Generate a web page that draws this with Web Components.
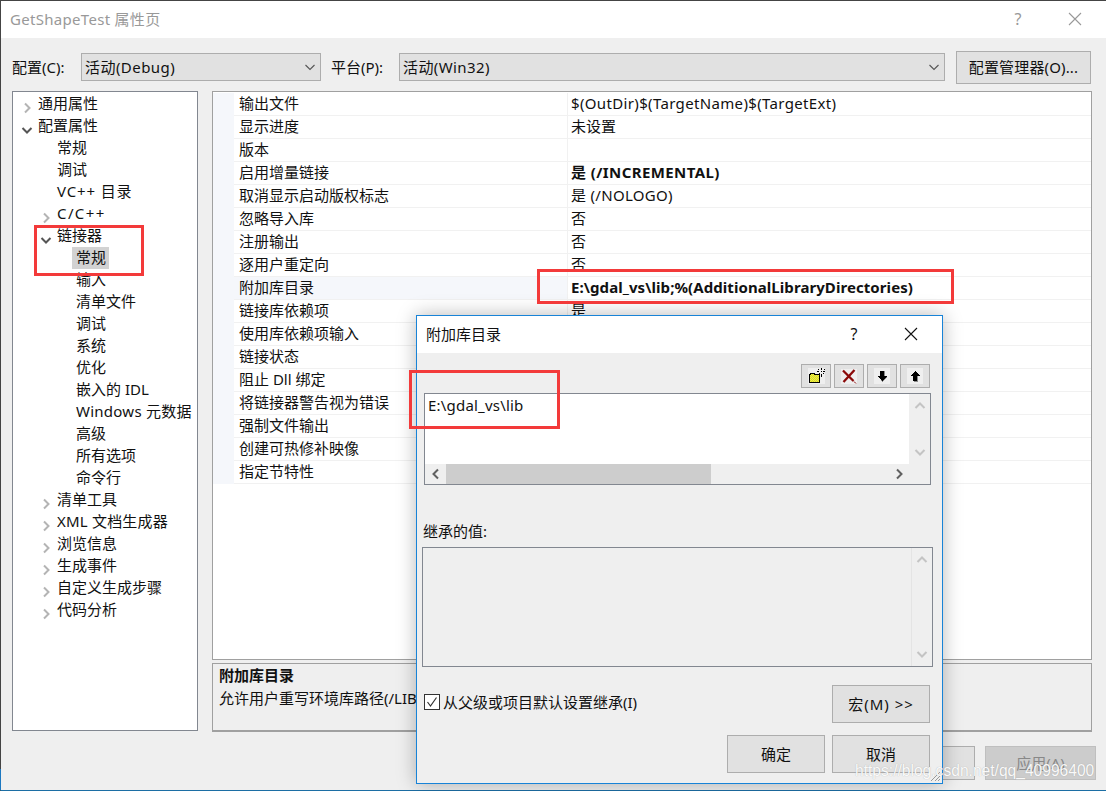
<!DOCTYPE html>
<html>
<head>
<meta charset="utf-8">
<style>
html, body { margin: 0; padding: 0; background: #efefef; }
body { width: 1106px; height: 791px; overflow: hidden; font: 15px "Noto Sans", "Noto Sans CJK SC", sans-serif; color: #111; }
</style>
</head>
<body>
<script>
function define(name, css, html, init) {
    customElements.define(name, class extends HTMLElement {
        constructor() {
            super();
            this.attachShadow({mode: 'open'});
            this.shadowRoot.innerHTML = `<style>${css}</style>${html}`;
        }
        connectedCallback() {
            if (init) init(this, this.shadowRoot);
        }
    });
}

const chevron = (dir, color, size) => {
    const d = {
        down: 'M1.5 4 L6 8.5 L10.5 4',
        up: 'M1.5 8 L6 3.5 L10.5 8',
        left: 'M8 1.5 L3.5 6 L8 10.5',
        right: 'M4 1.5 L8.5 6 L4 10.5'
    }[dir];
    return `<svg width="${size}" height="${size}" viewBox="0 0 12 12"><path d="${d}" fill="none" stroke="${color}" stroke-width="2"/></svg>`;
};

define('title-bar', `
    :host { display: flex; align-items: center; background: #fff; box-sizing: border-box; padding-bottom: 2px; }
    .t { flex: 1; padding-left: 9px; color: var(--title-color, #999); letter-spacing: var(--track, 0); }
    .q { width: 20px; text-align: center; color: var(--ctl-color, #999); font-size: 16px; }
    .x { display: flex; margin: 0 24px 0 40px; }
`, `
    <div class="t"><slot></slot></div>
    <div class="q">?</div>
    <div class="x"><svg width="14" height="14" viewBox="0 0 14 14"><path d="M1 1 L13 13 M13 1 L1 13" stroke="var(--ctl-color, #999)" stroke-width="1.1" fill="none"/></svg></div>
`);

define('combo-box', `
    :host { display: flex; align-items: center; justify-content: space-between; box-sizing: border-box; height: 28px; background: #e1e1e1; border: 1px solid #adadad; padding: 0 4px 0 3px; letter-spacing: var(--track, 0); }
    span { padding-bottom: 2px; }
    svg { display: block; }
`, `<span><slot></slot></span>${chevron('down', '#555', 12).replace('stroke-width="2"', 'stroke-width="1.1"')}`);

define('push-button', `
    :host { display: flex; align-items: center; justify-content: center; box-sizing: border-box; background: #e1e1e1; border: 1px solid #adadad; letter-spacing: var(--track, 0); padding-bottom: 2px; }
    :host([disabled]) { background: #ccc; border-color: #bfbfbf; color: #888; }
`, `<slot></slot>`);

define('tree-view', `
    :host { display: block; box-sizing: border-box; background: #fff; border: 1px solid #828790; padding: 1px 0 0 0; }
`, `<slot></slot>`);

define('tree-item', `
    :host { display: flex; align-items: center; height: 22px; white-space: nowrap; }
    .arrow { width: 12px; height: 12px; margin-right: 2px; flex: none; }
    .label { padding: 0 3px 2px; line-height: 20px; letter-spacing: var(--track, 0); }
    :host([selected]) .label { background: #d2d2d2; padding-left: 4px; margin-left: -1px; }
`, `<span class="arrow"></span><span class="label"><slot></slot></span>`, (el, root) => {
    el.style.paddingLeft = [8, 27, 46][+el.getAttribute('depth')] + 'px';
    const state = el.getAttribute('state');
    const arrow = root.querySelector('.arrow');
    if (state === 'open') arrow.innerHTML = chevron('down', '#555', 12);
    if (state === 'closed') arrow.innerHTML = chevron('right', '#b4b4b4', 12);
});

define('prop-grid', `
    :host { display: block; box-sizing: border-box; background: #fff; border: 1px solid #a0a0a0; padding-top: 1px; }
`, `<slot></slot>`);

define('prop-row', `
    :host { display: grid; grid-template-columns: 21px 334px 1fr; height: 23px; box-sizing: border-box; white-space: nowrap; }
    .gutter { background: #f5f7fb; }
    .n, .v { line-height: 20px; padding-bottom: 2px; border-bottom: 1px solid #f1f1f1; }
    .n { padding-left: 5px; border-right: 1px solid #f1f1f1; }
    .v { padding-left: 3px; letter-spacing: var(--track, 0); }
    :host([strong]) .v { font-weight: 700; }
    :host([active]) .n { background: #f5f7fb; }
`, `<div class="gutter"></div><div class="n"></div><div class="v"></div>`, (el, root) => {
    root.querySelector('.n').textContent = el.getAttribute('name');
    root.querySelector('.v').textContent = el.getAttribute('value') || '';
});

define('desc-panel', `
    :host { display: block; box-sizing: border-box; background: #efefef; border: 1px solid #a0a0a0; border-bottom-width: 2px; padding: 0 6px; white-space: nowrap; overflow: hidden; }
    .h { font-weight: 700; line-height: 23px; }
    .b { line-height: 23px; }
`, `<div class="h"><slot name="title"></slot></div><div class="b"><slot></slot></div>`);

define('tool-button', `
    :host { display: flex; align-items: center; justify-content: center; box-sizing: border-box; width: 30px; height: 24px; background: #e1e1e1; border: 1px solid #adadad; }
    .i { display: flex; background: #efefef; }
    ::slotted(svg) { display: block; }
`, `<div class="i"><slot></slot></div>`);

define('scroll-bar', `
    :host { display: flex; box-sizing: border-box; background: #efefef; flex: none; }
    :host([dir="h"]) { height: 20px; align-items: center; }
    :host([dir="v"]) { width: 21px; flex-direction: column; align-items: center; justify-content: space-between; padding: 6px 0; }
    .b { flex: none; display: flex; align-items: center; justify-content: center; width: 21px; }
    .thumb { height: 100%; background: #cdcdcd; width: 265px; flex: none; }
    .sp { flex: 1; }
`, ``, (el, root) => {
    if (root.querySelector('.b')) return;
    const color = el.getAttribute('arrows') || '#606060';
    const holder = document.createElement('template');
    if (el.getAttribute('dir') === 'h') {
        holder.innerHTML = `<div class="b">${chevron('left', color, 12)}</div><div class="thumb"></div><div class="sp"></div><div class="b">${chevron('right', color, 12)}</div>`;
    } else {
        holder.innerHTML = `<div class="b">${chevron('up', color, 12)}</div><div class="b">${chevron('down', color, 12)}</div>`;
    }
    root.appendChild(holder.content);
});

define('list-box', `
    :host { display: grid; grid-template-columns: 1fr 21px; grid-template-rows: 1fr 20px; box-sizing: border-box; border: 1px solid #828790; background: #efefef; }
    .text { background: #fff; padding: 0 3px; line-height: 23px; letter-spacing: .2px; }
`, `<div class="text"><slot></slot></div><scroll-bar dir="v" arrows="#c4c4c4"></scroll-bar><scroll-bar dir="h"></scroll-bar><div></div>`);

define('check-box', `
    :host { display: flex; align-items: center; gap: 3px; white-space: nowrap; }
    .box { width: 14px; height: 14px; border: 1px solid #333; background: #fff; display: flex; flex: none; }
`, `<div class="box"><svg width="14" height="14" viewBox="0 0 14 14"><path d="M2.5 7 L5.5 11 L11.5 2.5" fill="none" stroke="#333" stroke-width="1.2"/></svg></div><slot></slot>`);

define('red-mark', `
    :host { position: absolute; box-sizing: border-box; border: 3px solid #f33a3a; pointer-events: none; z-index: 5; }
`, ``);

define('sub-dialog', `
    :host { position: absolute; left: 415px; top: 314px; width: 527px; height: 469px; box-sizing: border-box; display: flex; flex-direction: column; background: #efefef; border: 1px solid #1883d7; box-shadow: 0 0 18px rgba(0,0,0,.28); z-index: 3; --title-color: #111; --ctl-color: #111; }
    title-bar { height: 37px; flex: none; }
    .tools { display: flex; justify-content: flex-end; gap: 3px; margin: 11px 12px 5px 0; }
    list-box { margin: 0 11px 0 7px; height: 92px; flex: none; }
    .inh { margin: 36px 0 6px 6px; line-height: 20px; }
    .inhbox { margin: 0 9px 0 5px; height: 118px; flex: none; border: 1px solid #828790; display: flex; justify-content: flex-end; }
    .inhbox scroll-bar { border-left: 1px solid #e4e4e4; }
    .foot { display: grid; grid-template-columns: 1fr 98px; column-gap: 7px; row-gap: 12px; margin: 18px 12px 0 7px; }
    check-box { align-self: start; margin-top: 6px; }
    push-button { height: 38px; }
    .ok { grid-column: 1 / 3; display: flex; justify-content: flex-end; gap: 7px; }
    .ok push-button { width: 98px; }
    .grip { position: absolute; right: 1px; bottom: 1px; }
`, `
    <title-bar>附加库目录</title-bar>
    <div class="tools">
        <tool-button><svg width="17" height="16" viewBox="0 0 17 16" shape-rendering="crispEdges">
            <defs><pattern id="dither" width="2" height="2" patternUnits="userSpaceOnUse"><rect width="2" height="2" fill="#ffff22"/><rect width="1" height="1" fill="#c9c94e"/><rect x="1" y="1" width="1" height="1" fill="#c9c94e"/></pattern></defs>
            <path d="M1.5 6.5h1v-1h4v1h5v8h-10z" fill="url(#dither)" stroke="#000" stroke-width="1.4"/>
            <path d="M13 0h1v2h-1zM13 6h1v3h-1zM9 3h2v1H9zM15 3h2v1h-2zM10 1h1v1h-1zM16 1h1v1h-1zM11 5h1v1h-1zM15 5h1v1h-1zM13 3h1v1h-1z" fill="#000"/>
        </svg></tool-button>
        <tool-button><svg width="16" height="15" viewBox="0 0 16 15"><path d="M2 1.5 L12.5 12 M13.5 1 L2.5 13" stroke="#8b0a0a" stroke-width="2.3" fill="none"/><path d="M13 12.5l2 2" stroke="#8b0a0a" fill="none"/></svg></tool-button>
        <tool-button><svg width="16" height="16" viewBox="0 0 16 16" shape-rendering="crispEdges"><path d="M7 3h4v5h2v1l-5 5-1-1z" fill="#8a8a8a"/><path d="M6 3h4v5h3l-5 5-5-5h3z" fill="#000"/></svg></tool-button>
        <tool-button><svg width="16" height="16" viewBox="0 0 16 16" shape-rendering="crispEdges"><path d="M7 8h4v6H7z" fill="#8a8a8a"/><path d="M8 3l5 5h-3v5H6V8H3z" fill="#000"/></svg></tool-button>
    </div>
    <list-box>E:\\gdal_vs\\lib</list-box>
    <div class="inh">继承的值:</div>
    <div class="inhbox"><scroll-bar dir="v" arrows="#c4c4c4"></scroll-bar></div>
    <div class="foot">
        <check-box>从父级或项目默认设置继承(I)</check-box>
        <push-button style="--track:1px">宏(M) &gt;&gt;</push-button>
        <div class="ok"><push-button>确定</push-button><push-button>取消</push-button></div>
    </div>
    <svg class="grip" width="12" height="12" viewBox="0 0 12 12"><path d="M11 2 L2 11 M11 6 L6 11 M11 9 L9 11" stroke="#9a9a9a" fill="none"/></svg>
`);

define('water-mark', `
    :host { position: absolute; left: 854px; top: 761px; z-index: 6; font: 15.6px "Liberation Sans", sans-serif; color: rgba(255,255,255,.95); text-shadow: 0 0 1px rgba(120,120,120,.55); white-space: nowrap; }
`, `<slot></slot>`);

define('props-window', `
    :host { display: flex; flex-direction: column; position: relative; box-sizing: border-box; width: 1106px; height: 791px; background: #efefef; border-top: 1px solid #444; border-left: 1px solid #444; border-bottom: 1px solid #1c6ea4; }
    title-bar { height: 37px; flex: none; --track: .3px; }
    .edge { position: absolute; left: -1px; bottom: 0; width: 1px; height: 21px; background: #1c78c0; }
    .config { display: flex; align-items: center; height: 48px; padding-top: 5px; margin-left: 11px; flex: none; }
    .lab { white-space: nowrap; flex: none; padding-bottom: 2px; }
    .l1 { width: 69px; }
    .l2 { width: 68px; margin-left: 10px; }
    .c1 { width: 240px; --track: .45px; }
    .c2 { width: 546px; --track: .4px; }
    .mgr { width: 135px; height: 33px; margin-left: 11px; --track: .15px; }
    .main { display: grid; grid-template-columns: 186px 880px; column-gap: 14px; grid-template-rows: 569px 69px; row-gap: 3px; margin-left: 11px; flex: none; height: 641px; }
    tree-view { grid-row: 1 / 3; height: 640px; }
    .bottom { display: flex; justify-content: flex-end; gap: 10px; margin: 14px 10px 0 0; }
    .bottom push-button { width: 111px; height: 34px; }
`, `
    <title-bar>GetShapeTest 属性页</title-bar>
    <div class="config">
        <span class="lab l1">配置(C):</span>
        <combo-box class="c1">活动(Debug)</combo-box>
        <span class="lab l2">平台(P):</span>
        <combo-box class="c2">活动(Win32)</combo-box>
        <push-button class="mgr">配置管理器(O)...</push-button>
    </div>
    <div class="main">
        <tree-view>
            <tree-item depth="0" state="closed">通用属性</tree-item>
            <tree-item depth="0" state="open">配置属性</tree-item>
            <tree-item depth="1">常规</tree-item>
            <tree-item depth="1">调试</tree-item>
            <tree-item depth="1" style="--track:.85px">VC++ 目录</tree-item>
            <tree-item depth="1" state="closed" style="--track:1.4px">C/C++</tree-item>
            <tree-item depth="1" state="open">链接器</tree-item>
            <tree-item depth="2" selected>常规</tree-item>
            <tree-item depth="2">输入</tree-item>
            <tree-item depth="2">清单文件</tree-item>
            <tree-item depth="2">调试</tree-item>
            <tree-item depth="2">系统</tree-item>
            <tree-item depth="2">优化</tree-item>
            <tree-item depth="2">嵌入的 IDL</tree-item>
            <tree-item depth="2" style="--track:.25px">Windows 元数据</tree-item>
            <tree-item depth="2">高级</tree-item>
            <tree-item depth="2">所有选项</tree-item>
            <tree-item depth="2">命令行</tree-item>
            <tree-item depth="1" state="closed">清单工具</tree-item>
            <tree-item depth="1" state="closed" style="--track:.2px">XML 文档生成器</tree-item>
            <tree-item depth="1" state="closed">浏览信息</tree-item>
            <tree-item depth="1" state="closed">生成事件</tree-item>
            <tree-item depth="1" state="closed">自定义生成步骤</tree-item>
            <tree-item depth="1" state="closed">代码分析</tree-item>
        </tree-view>
        <prop-grid>
            <prop-row name="输出文件" value="$(OutDir)$(TargetName)$(TargetExt)" style="--track:.35px"></prop-row>
            <prop-row name="显示进度" value="未设置"></prop-row>
            <prop-row name="版本"></prop-row>
            <prop-row name="启用增量链接" value="是 (/INCREMENTAL)" strong style="--track:.4px"></prop-row>
            <prop-row name="取消显示启动版权标志" value="是 (/NOLOGO)" style="--track:.3px"></prop-row>
            <prop-row name="忽略导入库" value="否"></prop-row>
            <prop-row name="注册输出" value="否"></prop-row>
            <prop-row name="逐用户重定向" value="否"></prop-row>
            <prop-row name="附加库目录" value="E:\\gdal_vs\\lib;%(AdditionalLibraryDirectories)" strong active style="--track:.07px"></prop-row>
            <prop-row name="链接库依赖项" value="是"></prop-row>
            <prop-row name="使用库依赖项输入" value="否"></prop-row>
            <prop-row name="链接状态"></prop-row>
            <prop-row name="阻止 Dll 绑定"></prop-row>
            <prop-row name="将链接器警告视为错误" value="否"></prop-row>
            <prop-row name="强制文件输出"></prop-row>
            <prop-row name="创建可热修补映像"></prop-row>
            <prop-row name="指定节特性"></prop-row>
        </prop-grid>
        <desc-panel><span slot="title">附加库目录</span>允许用户重写环境库路径(/LIBPATH:folder)</desc-panel>
    </div>
    <div class="bottom">
        <push-button>取消</push-button>
        <push-button disabled>应用(A)</push-button>
    </div>
    <div class="edge"></div>
    <slot></slot>
`);

const page = document.createElement('props-window');
page.innerHTML = `
    <sub-dialog></sub-dialog>
    <red-mark style="left:33px;top:224px;width:110px;height:51px"></red-mark>
    <red-mark style="left:536px;top:268px;width:417px;height:35px"></red-mark>
    <red-mark style="left:408px;top:369px;width:151px;height:59px"></red-mark>
    <water-mark>https://blog.csdn.net/qq_40996400</water-mark>
`;
document.body.appendChild(page);
</script>
</body>
</html>
